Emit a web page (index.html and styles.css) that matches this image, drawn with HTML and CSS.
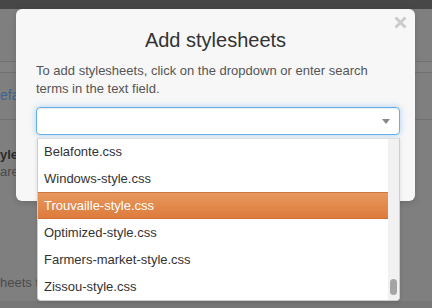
FILE: index.html
```html
<!DOCTYPE html>
<html>
<head>
<meta charset="utf-8">
<link rel="stylesheet" href="styles.css">
</head>
<body>
<div class="page">
  <div class="topbar"></div>
  <div class="page-head"></div>
  <div class="tabs"></div>
  <div class="row-link"><a class="link">efa</a></div>
  <div class="row-info">
    <div class="info-title">yle</div>
    <div class="info-text">are</div>
  </div>
  <div class="row-note"><span class="note">heets to</span></div>
  <div class="footer"></div>
</div>

<div class="modal">
  <button class="close" type="button" aria-label="Close">
    <svg width="13" height="13" viewBox="0 0 13 13"><path d="M1.5 1.5 L11.5 11.5 M11.5 1.5 L1.5 11.5" stroke="#cbcbcb" stroke-width="3" fill="none"/></svg>
  </button>
  <div class="modal-header">
    <h2 class="modal-title">Add stylesheets</h2>
  </div>
  <div class="modal-body">
    <p class="modal-text">To add stylesheets, click on the dropdown or enter search terms in the text field.</p>
    <div class="combo">
      <input class="combo-input" type="text">
      <span class="combo-arrow"></span>
      <div class="combo-list">
        <ul class="options">
          <li>Belafonte.css</li>
          <li>Windows-style.css</li>
          <li class="active">Trouvaille-style.css</li>
          <li>Optimized-style.css</li>
          <li>Farmers-market-style.css</li>
          <li>Zissou-style.css</li>
        </ul>
        <div class="scrollbar"><div class="thumb"></div></div>
      </div>
    </div>
  </div>
</div>
</body>
</html>
```

FILE: styles.css
```css
* {
  box-sizing: border-box;
  margin: 0;
  padding: 0;
}

html, body {
  width: 432px;
  height: 308px;
  overflow: hidden;
}

body {
  position: relative;
  font-family: "Liberation Sans", Arial, sans-serif;
  background: #7f7f7f;
}

/* background page (dimmed) */
.page {
  width: 432px;
  height: 308px;
  display: flex;
  flex-direction: column;
  overflow: hidden;
}

.topbar {
  flex: none;
  height: 9px;
  background: #474747;
}

.page-head {
  flex: none;
  height: 53px;
  border-bottom: 1px solid #727272;
}

.tabs {
  flex: none;
  height: 11px;
  border-bottom: 1px solid #727272;
  background: #828282;
}

.row-link {
  flex: none;
  height: 47px;
  padding-top: 12px;
  border-bottom: 1px solid #727272;
}

.link {
  display: block;
  font-size: 14px;
  line-height: 20px;
  color: #3a6590;
}

.row-info {
  flex: none;
  height: 154px;
  padding-top: 26px;
  font-size: 13px;
  line-height: 17px;
}

.info-title {
  font-weight: bold;
  color: #2b2b2b;
}

.info-text {
  color: #4a4a4a;
}

.row-note {
  flex: none;
  height: 27px;
  font-size: 13px;
  line-height: 17px;
  color: #4a4a4a;
}

.note {
  display: block;
}

.footer {
  flex: 1;
  background: #777777;
}

/* modal */
.modal {
  position: absolute;
  left: 16px;
  top: 9px;
  width: 399px;
  padding-bottom: 66px;
  background: #f7f7f7;
  border-radius: 6px;
  box-shadow: 0 2px 6px rgba(0, 0, 0, 0.15);
}

.close {
  position: absolute;
  top: 7px;
  right: 8px;
  width: 13px;
  height: 13px;
  border: 0;
  background: none;
  display: flex;
}

.modal-header {
  padding-top: 20px;
}

.modal-title {
  font-size: 20px;
  line-height: 22px;
  font-weight: normal;
  text-align: center;
  color: #333333;
}

.modal-body {
  padding: 0 15px 0 20px;
}

.modal-text {
  margin-top: 11px;
  font-size: 13px;
  line-height: 18px;
  color: #555555;
}

.combo {
  position: relative;
  margin-top: 9px;
}

.combo-input {
  display: block;
  width: 100%;
  height: 28px;
  border: 1px solid #66afe9;
  border-radius: 4px;
  background: #ffffff;
  outline: none;
  box-shadow: inset 0 1px 1px rgba(0, 0, 0, 0.075), 0 0 6px rgba(102, 175, 233, 0.55);
}

.combo-arrow {
  position: absolute;
  top: 12px;
  right: 10px;
  width: 0;
  height: 0;
  border-left: 4.5px solid transparent;
  border-right: 4.5px solid transparent;
  border-top: 5px solid #888888;
}

.combo-list {
  position: absolute;
  top: 31px;
  left: 1px;
  right: 0;
  height: 163px;
  display: flex;
  overflow: hidden;
  background: #ffffff;
  border: 1px solid #cccccc;
  border-top-color: #dddddd;
  border-radius: 0 0 4px 4px;
  box-shadow: 0 2px 4px rgba(0, 0, 0, 0.12);
}

.options {
  flex: 1;
  margin-top: -1px;
  list-style: none;
  font-size: 13px;
  line-height: 27px;
  color: #333333;
}

.options li {
  height: 27px;
  padding-left: 6px;
  white-space: nowrap;
}

.options li.active {
  color: #ffffff;
  background: linear-gradient(#e9995f, #dc7a3b);
  box-shadow: inset 0 1px 0 #cc7643, inset 0 -1px 0 #d06e31;
}

.scrollbar {
  flex: none;
  width: 11px;
  display: flex;
  flex-direction: column;
  justify-content: flex-end;
  padding: 0 2px 5px 2px;
  background: #f1f1f1;
}

.thumb {
  height: 16px;
  width: 7px;
  border-radius: 4px;
  background: #a5a5a5;
}
```
